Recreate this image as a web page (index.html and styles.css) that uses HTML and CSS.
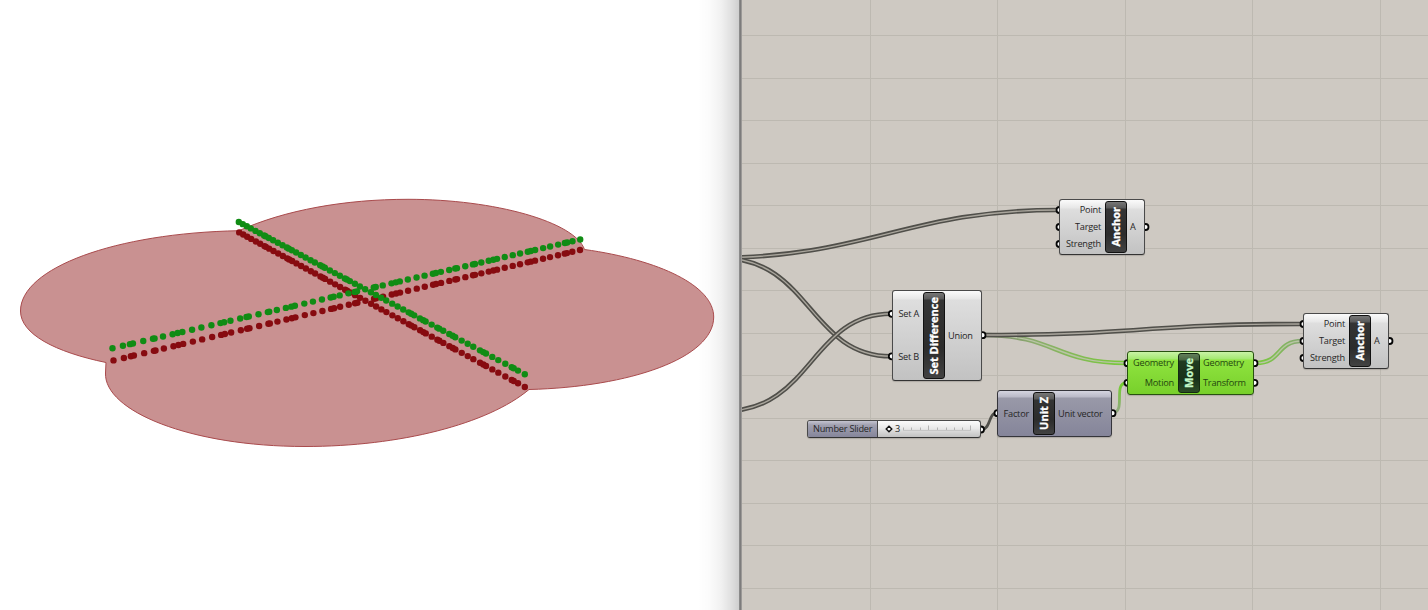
FILE: index.html
```
<!DOCTYPE html>
<html lang="en">
<head>
<meta charset="utf-8">
<title>Graph editor</title>
<link rel="stylesheet" href="styles.css">
</head>
<body>
<div class="workspace">
  <section class="viewport">
    <svg class="scene" width="739" height="610" viewBox="0 0 739 610">
      <path class="surface" d="M239 230.700C285 210 345 199.300 408 199.300C495 199.300 575 222 584.500 249.500C660 260 713.700 286 713.700 317C713.700 358 630 387 529 389.500C488 424 400 446.500 305 446.500C190 446.500 104 411 105.500 373L106 362.500C55 352 20.500 334 20.500 311C20.500 268 115 233 239 230.700Z"/>
      <g class="points"></g>
    </svg>
  </section>
  <section class="canvas">
    <svg class="wires" width="689" height="610" viewBox="739 0 689 610">
      <defs>
        <linearGradient id="fade-a" gradientUnits="userSpaceOnUse" x1="984" y1="0" x2="1127" y2="0"><stop offset="0" stop-color="#77806a"/><stop offset=".35" stop-color="#8cac6d"/><stop offset="1" stop-color="#78cb38"/></linearGradient>
        <linearGradient id="fade-b" gradientUnits="userSpaceOnUse" x1="1256" y1="0" x2="1302" y2="0"><stop offset="0" stop-color="#78cb38"/><stop offset="1" stop-color="#89a777"/></linearGradient>
        <linearGradient id="fade-c" gradientUnits="userSpaceOnUse" x1="0" y1="412" x2="0" y2="383"><stop offset="0" stop-color="#92a881"/><stop offset="1" stop-color="#72cf2c"/></linearGradient>
      </defs>
      <path class="grid" d="M739 35.500H1428M739 78.500H1428M739 120.500H1428M739 163.500H1428M739 205.500H1428M739 248.500H1428M739 290.500H1428M739 333.500H1428M739 375.500H1428M739 418.500H1428M739 460.500H1428M739 503.500H1428M739 545.500H1428M739 588.500H1428M870.500 0V610M997.500 0V610M1125.500 0V610M1252.500 0V610M1380.500 0V610"/>
      <path class="outer" d="M710 258C870 258 905 210 1058 210"/>
      <path class="inner" d="M710 258C870 258 905 210 1058 210"/>
      <path class="outer" d="M721 258C811 258 809 356.300 891 356.300"/>
      <path class="inner" d="M721 258C811 258 809 356.300 891 356.300"/>
      <path class="outer" d="M725 411C812 411 811 313.800 891 313.800"/>
      <path class="inner" d="M725 411C812 411 811 313.800 891 313.800"/>
      <path class="outer green-a" d="M984 335C1055 335 1055 363 1126 363"/>
      <path class="inner leaf" d="M984 335C1055 335 1055 363 1126 363"/>
      <path class="outer" d="M984 335C1143 335 1143 324 1302 324"/>
      <path class="inner" d="M984 335C1143 335 1143 324 1302 324"/>
      <path class="outer green-b" d="M1256 363C1282 363 1276 341 1302 341"/>
      <path class="inner leaf" d="M1256 363C1282 363 1276 341 1302 341"/>
      <path class="single green-c" d="M1113 412.500C1126 412.500 1113 383 1126 383"/>
      <path class="single" d="M982 429.500C991 429 988 413 997 413"/>
      <g class="ports">
        <circle cx="1059.500" cy="210" r="3"/><circle cx="1059.500" cy="227" r="3"/><circle cx="1059.500" cy="244" r="3"/><circle cx="1145.500" cy="227" r="3"/>
        <circle cx="891.800" cy="313.800" r="3"/><circle cx="891.800" cy="356.300" r="3"/><circle cx="982.500" cy="335.200" r="3"/>
        <circle cx="1127.500" cy="363.200" r="3"/><circle cx="1127.500" cy="382.800" r="3"/><circle cx="1254.500" cy="363.200" r="3"/><circle cx="1254.500" cy="382.800" r="3"/>
        <circle cx="1303.500" cy="324" r="3"/><circle cx="1303.500" cy="341" r="3"/><circle cx="1303.500" cy="358" r="3"/><circle cx="1389.500" cy="341" r="3"/>
        <circle cx="997.500" cy="413.200" r="3"/><circle cx="1112.500" cy="413.200" r="3"/><circle cx="981" cy="429.500" r="3"/>
      </g>
    </svg>

    <div class="node anchor anchor-top">
      <div class="inputs"><span>Point</span><span>Target</span><span>Strength</span></div>
      <div class="band"><b>Anchor</b></div>
      <div class="outputs"><span>A</span></div>
    </div>
    <div class="node difference">
      <div class="inputs"><span>Set A</span><span>Set B</span></div>
      <div class="band"><b>Set Difference</b></div>
      <div class="outputs"><span>Union</span></div>
    </div>
    <div class="node anchor anchor-side">
      <div class="inputs"><span>Point</span><span>Target</span><span>Strength</span></div>
      <div class="band"><b>Anchor</b></div>
      <div class="outputs"><span>A</span></div>
    </div>
    <div class="node move">
      <div class="inputs"><span>Geometry</span><span>Motion</span></div>
      <div class="band"><b>Move</b></div>
      <div class="outputs"><span>Geometry</span><span>Transform</span></div>
    </div>
    <div class="node unit">
      <div class="inputs"><span>Factor</span></div>
      <div class="band"><b>Unit Z</b></div>
      <div class="outputs"><span>Unit vector</span></div>
    </div>
    <div class="node slider">
      <div class="slider-name">Number Slider</div>
      <div class="slider-track">
        <svg width="100" height="16" viewBox="0 0 100 16"><path class="ticks" d="M25.500 6.500V9M33.500 6.500V9M42.500 6.500V9M50.500 4.500V9.500M59.500 6.500V9M68.500 6.500V9M76.500 6.500V9M84.500 6.500V9M92.500 4.500V9.500"/><path class="ticks faint" d="M25 9.500H93"/><path class="grip" d="M11 5.200L13.800 8L11 10.800L8.200 8Z"/></svg>
        <span>3</span>
      </div>
    </div>
  </section>
</div>
<script src="points.js"></script>
</body>
</html>
```

FILE: styles.css
```
body { margin: 0; font-family: "Open Sans", "Noto Sans", sans-serif; }
.workspace { display: flex; width: 1428px; height: 610px; overflow: hidden; background: #fff; }
.viewport { width: 739px; height: 610px; background: linear-gradient(to right, rgba(0,0,0,0) 697px, rgba(0,0,0,.015) 709px, rgba(0,0,0,.055) 721px, rgba(0,0,0,.12) 731px, rgba(0,0,0,.19) 739px); }
.scene, .wires { display: block; }
.surface { fill: #c99191; stroke: #a94a4c; stroke-width: 1; }
.point-low { fill: #870b10; }
.point-high { fill: #108c14; }
.canvas { position: relative; box-sizing: border-box; width: 689px; height: 610px; background: linear-gradient(to right, #8b8b8b 1px, #7d7c7c 1px, #7d7c7c 2px, #9b9997 2px, #9b9997 3px, #cec9c2 3px); }
.wires { clip-path: inset(0 0 0 3px); }
.wires path { fill: none; }
.wires .grid { stroke: #bdb9b1; stroke-width: 1; }
.outer { stroke: #504f4a; stroke-width: 4.600; }
.inner { stroke: #aaa69d; stroke-width: 1.400; }
.green-a { stroke: url(#fade-a); }
.green-b { stroke: url(#fade-b); }
.green-c { stroke: url(#fade-c); }
.leaf { stroke: #b9c5a5; }
.single { stroke: #504f4a; stroke-width: 2.800; }
.single.green-c { stroke: url(#fade-c); }
.ports circle { fill: #fff; stroke: #050505; stroke-width: 1.800; }
.node { position: absolute; box-sizing: border-box; display: flex; padding: 1px 0; border: 1px solid #4a4a4a; border-bottom-color: #333; border-radius: 3px; font-size: 9.200px; line-height: 12px; letter-spacing: -.22px; color: #262626; white-space: nowrap; background: linear-gradient(#fbfbfb, #e7e7e7 8px, #dedede 9px, #c2c2c2); box-shadow: 0 1px 1px rgba(0,0,0,.16); }
.inputs, .outputs { display: flex; flex-direction: column; justify-content: space-around; }
.inputs { align-items: flex-end; padding-right: 4px; box-sizing: border-box; }
.outputs { padding-left: 3px; }
.band { box-sizing: border-box; width: 22px; border: 1px solid #111; border-radius: 3px; display: flex; align-items: center; justify-content: center; color: #fff; background: linear-gradient(#777, #595959 6px, #343434 7px, #2c2c2c 65%, #424242); }
.band b { writing-mode: vertical-rl; transform: rotate(180deg); font-size: 11px; line-height: 20px; font-weight: 700; letter-spacing: 0; -webkit-text-stroke: .3px currentColor; }
.anchor { width: 86px; height: 56px; }
.anchor .inputs { width: 45px; }
.anchor-top { left: 320px; top: 199px; }
.anchor-side { left: 564px; top: 313px; }
.difference { left: 153px; top: 290px; width: 90px; height: 91px; }
.difference .inputs { width: 30px; }
.move { left: 388px; top: 351px; width: 127px; height: 44px; border-color: #285210; color: #24470f; background: linear-gradient(#c9f3a6, #a4e971 7px, #8fe33f 8px, #78d02b); }
.move .inputs { width: 50px; }
.move .band { color: #c4f8c7; border-color: #142a12; background: linear-gradient(#627f5a, #486542 6px, #203b21 7px, #183119 65%, #2c4b27); }
.unit { left: 258px; top: 390px; width: 115px; height: 47px; border-color: #35353b; background: linear-gradient(#d5d5e0, #b9b9c7 6px, #9999a8 7px, #85859a); }
.unit .inputs { width: 35px; }
.slider { left: 68px; top: 420px; width: 174px; height: 18px; padding: 0; }
.slider-name { width: 70px; box-sizing: border-box; padding: 2px 0 0 5px; border-right: 1px solid #444; border-radius: 2px 0 0 2px; background: linear-gradient(#c4c4d0, #a1a1b0 4px, #85859a); }
.slider-track { display: grid; }
.slider-track > * { grid-area: 1 / 1; }
.slider-track span { padding: 2px 0 0 17px; }
.ticks { fill: none; stroke: #b3b3b3; stroke-width: 1; }
.ticks.faint { stroke: #c6c6c6; }
.grip { fill: #fff; stroke: #111; stroke-width: 1.400; }
```

FILE: points.js
```
// Two rows of sample points on the surface, each with a copy moved upwards.
const shallow = [113.3,123.7,130.7,133.7,144,153.7,155.3,163.7,173.3,178.3,183,192.7,202,212,221,224.7,231,240.7,247,249.3,259,268.3,269.7,277.3,286.3,291.7,295.3,304.7,313.3,322.3,331,334,340,348.7,355,357.3,374,376,383,391.7,396,400,408,416.7,424.7,433,436,441,449.3,455.3,457,465.3,473,475,481.3,488.7,493.3,497,504.7,512.7,520,527.7,530.7,535,543,550,558,564.7,567,572.3,580];
const steep = [239,243,247,251,255.7,260,264.3,265.7,269,273.3,278,282.7,287,289,292,296.3,301,305.7,310.7,315,320.3,322.7,325,330,335,340,345,347,350,355,360,365.3,371,376,381.3,386.3,392.3,397.7,403.3,408.7,411.3,414.3,420,423.3,425.7,431.7,437.3,439.3,443.3,449.3,452.7,455.3,461.7,467.7,473.3,480,483.3,486,492.3,498.3,505.3,511.7,513.7,518,524.8];
const layer = document.querySelector(".points");
function row(xs, fromX, fromY, toX, toY, name) {
  const first = xs[0], last = xs[xs.length - 1];
  for (const x of xs) {
    const t = (x - first) / (last - first);
    const dot = document.createElementNS("http://www.w3.org/2000/svg", "circle");
    dot.setAttribute("cx", fromX + t * (toX - fromX));
    dot.setAttribute("cy", fromY + t * (toY - fromY));
    dot.setAttribute("r", 3.2);
    dot.setAttribute("class", name);
    layer.append(dot);
  }
}
row(shallow, 113.5, 360.4, 580, 250, "point-low");
row(steep, 239.2, 232.4, 524.8, 387, "point-low");
row(shallow, 112.5, 348.2, 580.2, 239.5, "point-high");
row(steep, 238.8, 222, 524.8, 374.2, "point-high");
```
